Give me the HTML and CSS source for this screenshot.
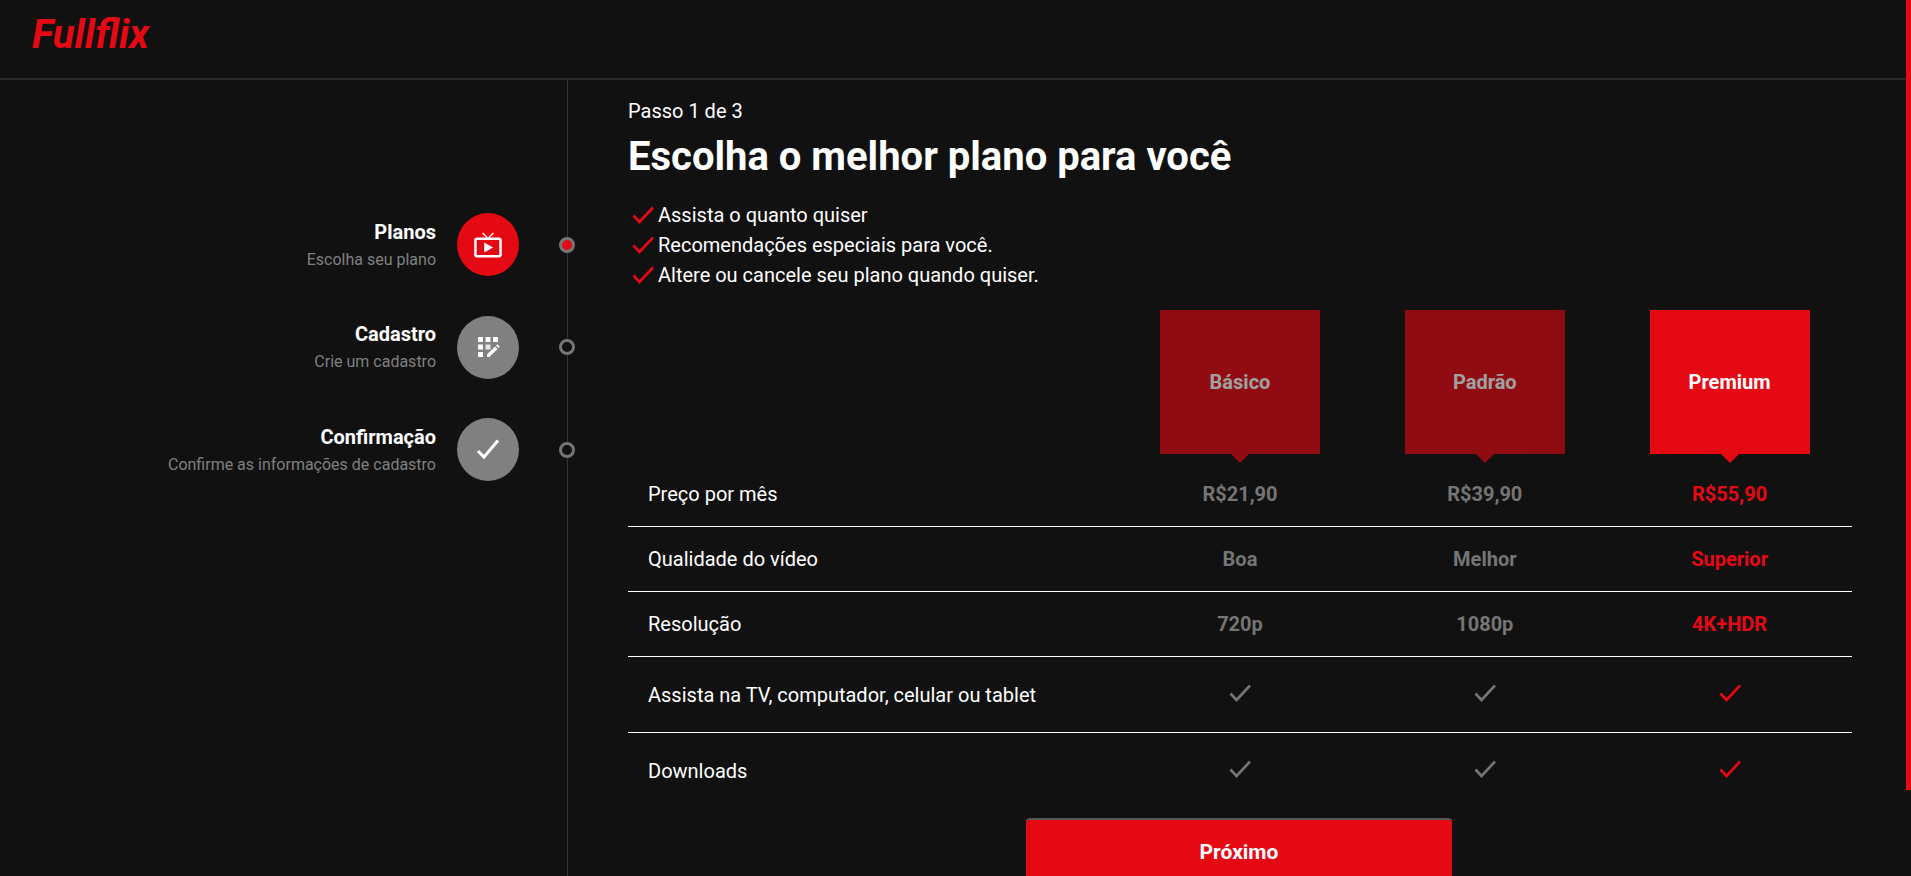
FILE: index.html
```html
<!DOCTYPE html>
<html lang="pt-BR">

<head>
    <meta charset="UTF-8">
    <meta name="viewport" content="width=device-width, initial-scale=1.0">
    <title>Fullflix</title>
    <link rel="stylesheet" href="styles.css">
</head>

<body>
    <header class="topbar">
        <span class="logo">Fullflix</span>
    </header>

    <div class="wrapper">
        <aside class="sidebar">
            <ul class="steps">
                <li class="step step-active">
                    <div class="step-text">
                        <strong>Planos</strong>
                        <span>Escolha seu plano</span>
                    </div>
                    <div class="step-icon">
                        <svg width="30" height="30" viewBox="0 0 24 24" fill="#fff">
                            <path d="M21 6h-7.59l3.29-3.29L16 2l-4 4-4-4-.71.71L10.59 6H3c-1.1 0-2 .89-2 2v12c0 1.1.9 2 2 2h18c1.1 0 2-.9 2-2V8c0-1.11-.9-2-2-2zm0 14H3V8h18v12zM9 10v8l7-4z" />
                        </svg>
                    </div>
                    <div class="step-dot"></div>
                </li>
                <li class="step">
                    <div class="step-text">
                        <strong>Cadastro</strong>
                        <span>Crie um cadastro</span>
                    </div>
                    <div class="step-icon">
                        <svg width="24" height="24" viewBox="0 0 24 24" fill="#fff">
                            <rect x="2" y="2" width="5" height="5" />
                            <rect x="9.5" y="2" width="5" height="5" />
                            <rect x="17" y="2" width="5" height="5" />
                            <rect x="2" y="9.500" width="5" height="5" />
                            <rect x="9.5" y="9.500" width="5" height="5" opacity=".8" />
                            <rect x="2" y="17" width="5" height="5" />
                            <path d="M11 22v-2.500l8-8 2.500 2.500-8 8zM20 10.500l1.200-1.200 2.500 2.500-1.200 1.200z" />
                        </svg>
                    </div>
                    <div class="step-dot"></div>
                </li>
                <li class="step">
                    <div class="step-text">
                        <strong>Confirmação</strong>
                        <span>Confirme as informações de cadastro</span>
                    </div>
                    <div class="step-icon">
                        <svg width="24" height="24" viewBox="0 0 24 24" fill="none" stroke="#fff" stroke-width="3">
                            <path d="M2 13l6 6L22 2.500" />
                        </svg>
                    </div>
                    <div class="step-dot"></div>
                </li>
            </ul>
        </aside>

        <main class="content">
            <p class="step-count">Passo 1 de 3</p>
            <h1>Escolha o melhor plano para você</h1>

            <ul class="benefits">
                <li><svg class="check" viewBox="0 0 22 18"><path d="M1.500 9.500L7.500 16 21 1.500" /></svg>Assista o quanto quiser</li>
                <li><svg class="check" viewBox="0 0 22 18"><path d="M1.500 9.500L7.500 16 21 1.500" /></svg>Recomendações especiais para você.</li>
                <li><svg class="check" viewBox="0 0 22 18"><path d="M1.500 9.500L7.500 16 21 1.500" /></svg>Altere ou cancele seu plano quando quiser.</li>
            </ul>

            <table class="plans">
                <thead>
                    <tr>
                        <th></th>
                        <th><div class="plan-box">Básico</div></th>
                        <th><div class="plan-box">Padrão</div></th>
                        <th><div class="plan-box selected">Premium</div></th>
                    </tr>
                </thead>
                <tbody>
                    <tr class="row-short">
                        <td>Preço por mês</td>
                        <td class="value">R$21,90</td>
                        <td class="value">R$39,90</td>
                        <td class="value selected">R$55,90</td>
                    </tr>
                    <tr class="row-short">
                        <td>Qualidade do vídeo</td>
                        <td class="value">Boa</td>
                        <td class="value">Melhor</td>
                        <td class="value selected">Superior</td>
                    </tr>
                    <tr class="row-short">
                        <td>Resolução</td>
                        <td class="value">720p</td>
                        <td class="value">1080p</td>
                        <td class="value selected">4K+HDR</td>
                    </tr>
                    <tr>
                        <td>Assista na TV, computador, celular ou tablet</td>
                        <td class="value"><svg class="check" viewBox="0 0 22 18"><path d="M1.500 9.500L7.500 16 21 1.500" /></svg></td>
                        <td class="value"><svg class="check" viewBox="0 0 22 18"><path d="M1.500 9.500L7.500 16 21 1.500" /></svg></td>
                        <td class="value selected"><svg class="check" viewBox="0 0 22 18"><path d="M1.500 9.500L7.500 16 21 1.500" /></svg></td>
                    </tr>
                    <tr>
                        <td>Downloads</td>
                        <td class="value"><svg class="check" viewBox="0 0 22 18"><path d="M1.500 9.500L7.500 16 21 1.500" /></svg></td>
                        <td class="value"><svg class="check" viewBox="0 0 22 18"><path d="M1.500 9.500L7.500 16 21 1.500" /></svg></td>
                        <td class="value selected"><svg class="check" viewBox="0 0 22 18"><path d="M1.500 9.500L7.500 16 21 1.500" /></svg></td>
                    </tr>
                </tbody>
            </table>

            <div class="actions">
                <button class="next-button">Próximo</button>
            </div>
        </main>
    </div>

    <div class="scroll-thumb"></div>
</body>

</html>
```

FILE: styles.css
```css
body {
    font-family: Roboto, sans-serif;
    background-color: #111;
    color: white;
    margin: 0;
    padding: 0;
}

ul {
    list-style: none;
    margin: 0;
    padding: 0;
}

.scroll-thumb {
    position: fixed;
    top: 0;
    right: 0;
    width: 5px;
    height: 790px;
    background-color: #e50914;
}

.topbar {
    height: 78px;
    border-bottom: 2px solid #2a2a2a;
    padding-left: 32px;
}

.logo {
    display: block;
    color: #e50914;
    font-size: 40px;
    font-weight: 700;
    font-style: italic;
    line-height: 70px;
}

.wrapper {
    display: flex;
    min-height: 891px;
}

.sidebar {
    width: 567px;
    border-right: 1px solid #333;
    flex-shrink: 0;
    padding-top: 133px;
}

.steps {
    display: flex;
    flex-direction: column;
    gap: 39.5px;
}

.step {
    display: flex;
    align-items: center;
    justify-content: flex-end;
    height: 63px;
    margin-right: -8px;
}

.step-text {
    display: flex;
    flex-direction: column;
    align-items: flex-end;
    gap: 8px;
    margin-right: 21px;
}

.step-text strong {
    font-size: 20px;
    line-height: 22px;
}

.step-text span {
    color: #808080;
    font-size: 16px;
    line-height: 18px;
}

.step-icon {
    width: 62px;
    height: 63px;
    border-radius: 50%;
    background-color: #808080;
    display: flex;
    align-items: center;
    justify-content: center;
    margin-right: 40px;
}

.step-active .step-icon {
    background-color: #e50914;
}

.step-dot {
    width: 16px;
    height: 16px;
    box-sizing: border-box;
    border: 3px solid #757575;
    border-radius: 50%;
    background-color: #111;
    position: relative;
}

.step-active .step-dot {
    background-color: #e50914;
}

.content {
    flex: 1;
    padding: 20px 59px 0 60px;
}

.step-count {
    margin: 0;
    font-size: 20px;
    line-height: 23px;
}

h1 {
    margin: 10px 0 0;
    font-size: 40px;
    font-weight: 700;
    line-height: 47px;
}

.benefits {
    margin-top: 20px;
}

.benefits li {
    display: flex;
    align-items: center;
    height: 30px;
    font-size: 20px;
    padding-left: 4px;
}

.check {
    width: 22px;
    height: 18px;
    fill: none;
    stroke: currentColor;
    stroke-width: 2.6;
}

.benefits .check {
    color: #e50914;
    margin-right: 4px;
}

.plans {
    width: 100%;
    margin-top: 20px;
    border-collapse: collapse;
    table-layout: fixed;
}

.plans th:first-child {
    width: 40%;
}

.plans th {
    padding: 0 0 8px;
}

.plan-box {
    position: relative;
    width: 160px;
    height: 144px;
    margin: 0 auto;
    display: flex;
    align-items: center;
    justify-content: center;
    background-color: #e50914;
    font-size: 20px;
    opacity: 0.6;
}

.plan-box.selected {
    opacity: 1;
}

.plan-box::after {
    content: "";
    position: absolute;
    top: 100%;
    left: 50%;
    margin-left: -9px;
    border-top: 9px solid #e50914;
    border-left: 9px solid transparent;
    border-right: 9px solid transparent;
}

.plans td {
    height: 75px;
    padding: 0 0 0 20px;
    font-size: 20px;
    border-bottom: 1px solid white;
}

.plans tr:last-child td {
    border-bottom: none;
}

.plans .row-short td {
    height: 64px;
}

.plans td.value {
    padding: 0;
    text-align: center;
    font-weight: 700;
    color: #757575;
}

.plans td.selected {
    color: #e50914;
}

.actions {
    display: flex;
    justify-content: center;
    margin-top: 10px;
}

.next-button {
    width: 426px;
    height: 66px;
    margin-right: 2px;
    background-color: #e50914;
    color: white;
    font-family: Roboto, sans-serif;
    font-size: 21px;
    font-weight: 700;
    border: none;
    border-top: 2px solid #555;
    border-radius: 4px;
    cursor: pointer;
}
```
